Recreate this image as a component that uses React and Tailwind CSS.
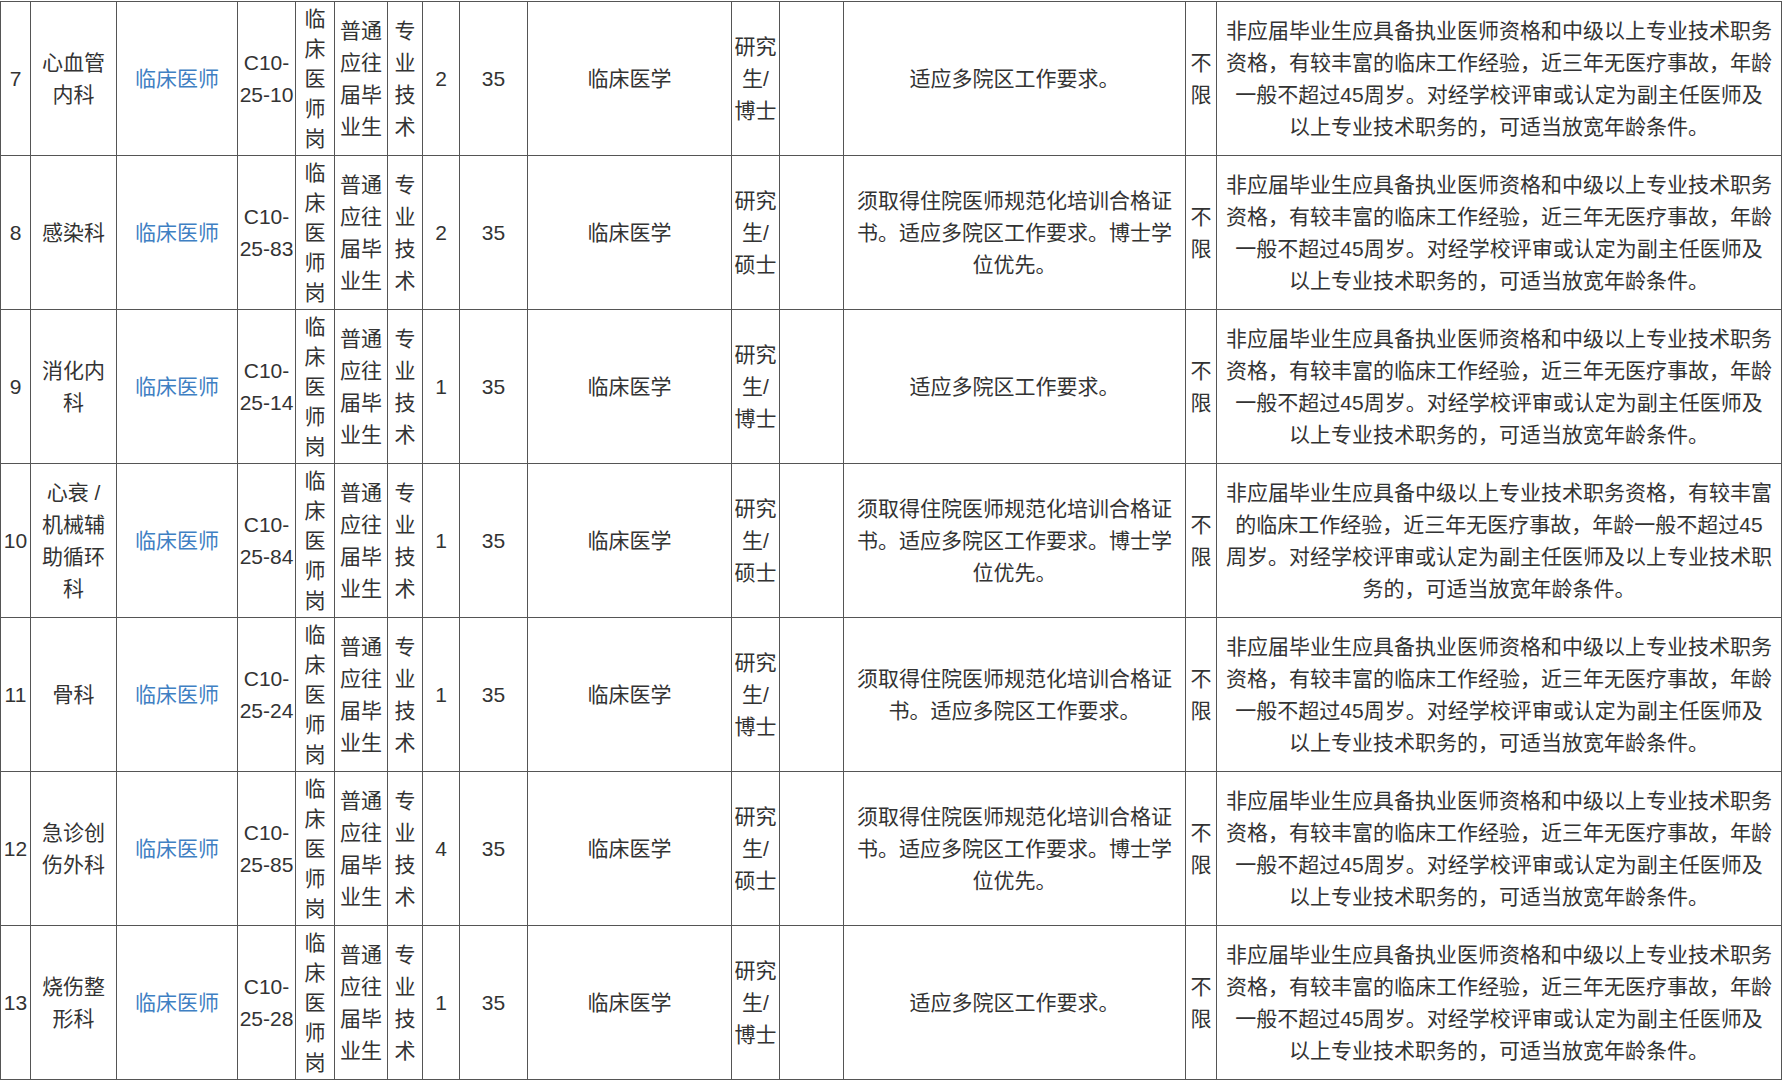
import React from 'react';

const reqA = [
  '非应届毕业生应具备执业医师资格和中级以上专业技术职务',
  '资格，有较丰富的临床工作经验，近三年无医疗事故，年龄',
  '一般不超过45周岁。对经学校评审或认定为副主任医师及',
  '以上专业技术职务的，可适当放宽年龄条件。',
];

const reqB = [
  '非应届毕业生应具备中级以上专业技术职务资格，有较丰富',
  '的临床工作经验，近三年无医疗事故，年龄一般不超过45',
  '周岁。对经学校评审或认定为副主任医师及以上专业技术职',
  '务的，可适当放宽年龄条件。',
];

const noteShort = ['适应多院区工作要求。'];
const noteLong = ['须取得住院医师规范化培训合格证', '书。适应多院区工作要求。博士学', '位优先。'];
const noteMid = ['须取得住院医师规范化培训合格证', '书。适应多院区工作要求。'];

const rows = [
  { no: '7', dept: ['心血管', '内科'], code: '25-10', count: '2', degree: '博士', note: noteShort, req: reqA },
  { no: '8', dept: ['感染科'], code: '25-83', count: '2', degree: '硕士', note: noteLong, req: reqA },
  { no: '9', dept: ['消化内', '科'], code: '25-14', count: '1', degree: '博士', note: noteShort, req: reqA },
  { no: '10', dept: ['心衰 /', '机械辅', '助循环', '科'], code: '25-84', count: '1', degree: '硕士', note: noteLong, req: reqB },
  { no: '11', dept: ['骨科'], code: '25-24', count: '1', degree: '博士', note: noteMid, req: reqA },
  { no: '12', dept: ['急诊创', '伤外科'], code: '25-85', count: '4', degree: '硕士', note: noteLong, req: reqA },
  { no: '13', dept: ['烧伤整', '形科'], code: '25-28', count: '1', degree: '博士', note: noteShort, req: reqA },
];

function Lines({ items }) {
  return items.map((t, i) => (
    <React.Fragment key={i}>
      {i > 0 && <br />}
      {t}
    </React.Fragment>
  ));
}

const td = 'border border-[#555] p-0 text-center align-middle';

export default function App() {
  return (
    <div
      className="w-[1783px] h-[1080px] overflow-hidden bg-white pt-px text-[#333] text-[21px] leading-[32px]"
      style={{ fontFamily: '"Liberation Sans", "Noto Sans CJK SC", sans-serif' }}
    >
      <table className="table-fixed border-collapse w-[1781px]">
        <colgroup>
          <col className="w-[30px]" />
          <col className="w-[86px]" />
          <col className="w-[121px]" />
          <col className="w-[58px]" />
          <col className="w-[39px]" />
          <col className="w-[53px]" />
          <col className="w-[35px]" />
          <col className="w-[37px]" />
          <col className="w-[68px]" />
          <col className="w-[204px]" />
          <col className="w-[48px]" />
          <col className="w-[64px]" />
          <col className="w-[342px]" />
          <col className="w-[31px]" />
          <col className="w-[565px]" />
        </colgroup>
        <tbody>
          {rows.map((r) => (
            <tr key={r.no} className="h-[154px]">
              <td className={td}>{r.no}</td>
              <td className={td}>
                <Lines items={r.dept} />
              </td>
              <td className={`${td} text-[#3f80c3]`}>临床医师</td>
              <td className={td}>
                C10-
                <br />
                {r.code}
              </td>
              <td className={`${td} leading-[30px]`}>
                <Lines items={['临', '床', '医', '师', '岗']} />
              </td>
              <td className={td}>
                <Lines items={['普通', '应往', '届毕', '业生']} />
              </td>
              <td className={td}>
                <Lines items={['专', '业', '技', '术']} />
              </td>
              <td className={td}>{r.count}</td>
              <td className={td}>35</td>
              <td className={td}>临床医学</td>
              <td className={td}>
                <Lines items={['研究', '生/', r.degree]} />
              </td>
              <td className={td}></td>
              <td className={`${td} whitespace-nowrap`}>
                <Lines items={r.note} />
              </td>
              <td className={td}>
                <Lines items={['不', '限']} />
              </td>
              <td className={`${td} whitespace-nowrap`}>
                <Lines items={r.req} />
              </td>
            </tr>
          ))}
        </tbody>
      </table>
    </div>
  );
}
